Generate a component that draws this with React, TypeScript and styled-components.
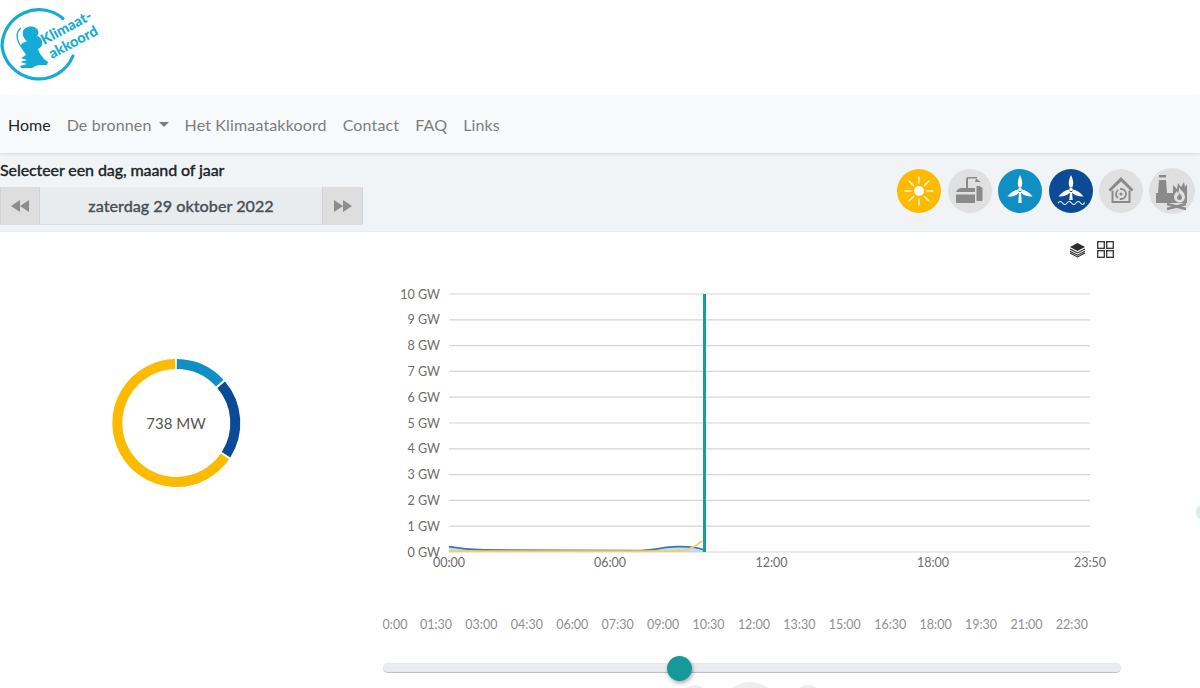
import React from "react";
import styled, { createGlobalStyle } from "styled-components";

const Global = createGlobalStyle`
  html, body { margin: 0; padding: 0; background: #fff; overflow: hidden; }
  body { font-family: Lato, "Open Sans", sans-serif; }
  #root { height: 688px; }
  * { box-sizing: border-box; }
`;

const Page = styled.div`
  position: relative;
  width: 1200px;
  height: 688px;
  overflow: hidden;
`;
const Header = styled.header`
  height: 96px;
  background: #fff;
`;
const Nav = styled.nav`
  height: 57px;
  background: #f8f9fa;
  display: flex;
  align-items: center;
  box-shadow: 0 1px 3px rgba(0, 0, 0, 0.12);
  position: relative;
  z-index: 1;
`;
const NavItem = styled.span<{ $active?: boolean }>`
  padding: 0 8px;
  font-size: 16px;
  line-height: 24px;
  letter-spacing: ${(p) => (p.$active ? 0 : 0.15)}px;
  color: ${(p) => (p.$active ? "#212529" : "#7d7d7d")};
  display: inline-flex;
  align-items: center;
`;
const Caret = styled.i`
  display: inline-block;
  margin-left: 7px;
  border-top: 5px solid #7d7d7d;
  border-left: 5px solid transparent;
  border-right: 5px solid transparent;
`;
const Toolbar = styled.section`
  height: 79px;
  background: #f1f4f6;
  border-bottom: 1px solid #e9ecee;
  display: flex;
  justify-content: space-between;
  padding-right: 5px;
`;
const DateColumn = styled.div`
  display: flex;
  flex-direction: column;
`;
const Title = styled.div`
  font-size: 16px;
  font-weight: 500;
  letter-spacing: -0.1px;
  -webkit-text-stroke: 0.3px #212529;
  line-height: 20px;
  height: 34px;
  padding-top: 7px;
  color: #212529;
`;
const DateBar = styled.div`
  display: grid;
  grid-template-columns: 40px 282px 41px;
  height: 38px;
  border-bottom: 1px solid #dcdfe2;
`;
const StepButton = styled.div`
  background: #dedede;
  border-left: 1px solid #d0d2d4;
  border-right: 1px solid #d0d2d4;
  display: flex;
  align-items: center;
  justify-content: center;
`;
const DateLabel = styled.div`
  background: #e9ecef;
  color: #495057;
  font-size: 16.2px;
  font-weight: 500;
  -webkit-text-stroke: 0.3px #495057;
  display: flex;
  align-items: center;
  justify-content: center;
`;
const Sources = styled.div`
  display: flex;
  align-items: center;
  gap: 6.6px;
  padding-bottom: 3px;
`;
const SourceIcon = styled.svg<{ $large?: boolean }>`
  width: ${(p) => (p.$large ? 46 : 44)}px;
  height: ${(p) => (p.$large ? 46 : 44)}px;
  margin-left: ${(p) => (p.$large ? -1 : 0)}px;
  display: block;
`;
const ViewRow = styled.div`
  height: 34px;
  display: flex;
  justify-content: flex-end;
  align-items: center;
  gap: 11px;
  padding-right: 86px;
`;
const ChartRow = styled.div`
  display: grid;
  grid-template-columns: 352px 848px;
  height: 312px;
`;
const DonutCell = styled.div`
  position: relative;
  height: 312px;
`;
const DonutSvg = styled.svg`
  display: block;
  width: 352px;
  height: 312px;
`;
const DonutText = styled.div`
  position: absolute;
  left: 0;
  width: 352px;
  top: 147px;
  text-align: center;
  font-size: 15px;
  line-height: 20px;
  color: #555;
`;
const ChartSvg = styled.svg`
  display: block;
  font-family: Lato, sans-serif;
`;
const Ticks = styled.div`
  display: grid;
  grid-template-columns: 36.6px repeat(15, 45.43px);
  margin: 39px 0 0 376.7px;
  font-size: 12.5px;
  line-height: 16px;
  color: #8f8f8f;
  text-align: center;
`;
const SliderWrap = styled.div`
  position: relative;
  margin: 30px 0 0 383px;
  width: 738px;
  height: 10px;
  border-radius: 5px;
  background: #eaecef;
  border-bottom: 1px solid #bfc1c4;
  box-shadow: inset 0 0 0 1px #e6e8eb;
`;
const Thumb = styled.div`
  position: absolute;
  left: 283.5px;
  top: -7.5px;
  width: 25px;
  height: 25px;
  border-radius: 50%;
  background: #17989a;
  box-shadow: 1px 2px 4px rgba(0, 0, 0, 0.35);
`;
const Dots = styled.div`
  margin: 9px 0 0 682px;
  display: flex;
  align-items: flex-start;
`;
const Dot = styled.div<{ $size: number; $gap: number; $top: number }>`
  width: ${(p) => p.$size}px;
  height: ${(p) => p.$size}px;
  margin-left: ${(p) => p.$gap}px;
  margin-top: ${(p) => p.$top}px;
  border-radius: 50%;
  background: #eeeeee;
  flex: none;
`;
const EdgeMark = styled.div`
  position: absolute;
  left: 1196px;
  top: 506px;
  width: 8px;
  height: 13px;
  border-radius: 50%;
  background: #d6efec;
`;

function polar(r: number, deg: number): [number, number] {
  const a = ((deg - 90) * Math.PI) / 180;
  return [176.3 + r * Math.cos(a), 157 + r * Math.sin(a)];
}
function arc(from: number, to: number) {
  const r = 59;
  const [x1, y1] = polar(r, from);
  const [x2, y2] = polar(r, to);
  return `M${x1} ${y1}A${r} ${r} 0 ${to - from > 180 ? 1 : 0} 1 ${x2} ${y2}`;
}
const segments = [
  { from: 0.5, to: 47.5, color: "#0f8fc4" },
  { from: 49.5, to: 122.5, color: "#0b4a94" },
  { from: 124.5, to: 359, color: "#fdbb00" },
];

const GREY = "#8a8a8a";

const Turbine = ({ towerEnd = 34 }: { towerEnd?: number }) => (
  <g fill="#fff">
    <path d="M22 6C19 12 19.500 16 20.800 18.500h2.400C24.500 16 25 12 22 6z" />
    <path d="M24 20.500c3.500 .5 7.500 3 10.500 7C30 27.800 25.500 26.500 22.800 23.500z" />
    <path d="M20 20.500c-3.500 .5-7.500 3-10.500 7C14 27.800 18.500 26.500 21.200 23.500z" />
    <circle cx="22" cy="20.500" r="1.800" fill="#fff" />
    <path d={`M21 23h2l.7 ${towerEnd - 23}h-3.400z`} />
  </g>
);

const gridY = Array.from({ length: 11 }, (_, i) => ({ v: i, y: 286 - i * 25.8 }));
const xLabels: [string, number][] = [
  ["00:00", 97],
  ["06:00", 258],
  ["12:00", 419.5],
  ["18:00", 581],
  ["23:50", 738],
];
const tickLabels = ["0:00","01:30","03:00","04:30","06:00","07:30","09:00","10:30","12:00","13:30","15:00","16:30","18:00","19:30","21:00","22:30"];
const blueLine = "M97 280.700C107 282.500 115 283.800 131 284S250 284.800 285 284.700C300 284.500 312 281 325 280.700C335 280.500 345 281 352 284";

export default function App() {
  return (
    <Page>
      <Global />
      <Header>
        <svg width="110" height="92" viewBox="0 0 110 92" style={{ display: "block" }}>
          <path d="M73 56A37 37 0 0 1 2 46 37 37 0 0 1 63 18.500" fill="none" stroke="#14acd6" strokeWidth="3.200" strokeLinecap="round" />
          <path d="M23 31C25 26 34 25 37 29C39 31 39 34 37 36C41 37 43 41 42 45C41 47 40 48 38 49C39 53 42 56 44 59L48 62L47 65L41 65C37 65 35 66 32 68L21 68L20 66L27 64L20 62L27 60L21 58L26 55C25 52 21 49 21 46C21 43 25 42 27 41C24 39 22 35 23 31z" fill="#14acd6" />
          <path d="M21 28C16 32 15 38 22 48" fill="none" stroke="#14acd6" strokeWidth="1.300" />
          <g fill="#14acd6" fontFamily="Lato, sans-serif" fontWeight="900" fontSize="14.500">
            <text transform="translate(44 45) rotate(-28)">Klimaat-</text>
            <text transform="translate(52 59) rotate(-28)">akkoord</text>
          </g>
        </svg>
      </Header>
      <Nav>
        <NavItem $active>Home</NavItem>
        <NavItem>De bronnen<Caret /></NavItem>
        <NavItem>Het Klimaatakkoord</NavItem>
        <NavItem>Contact</NavItem>
        <NavItem>FAQ</NavItem>
        <NavItem>Links</NavItem>
      </Nav>
      <Toolbar>
        <DateColumn>
          <Title>Selecteer een dag, maand of jaar</Title>
          <DateBar>
            <StepButton>
              <svg width="18" height="12" viewBox="0 0 18 12"><path d="M9 0v12L0 6zM18 0v12L9 6z" fill="#8d8d8d" /></svg>
            </StepButton>
            <DateLabel>zaterdag 29 oktober 2022</DateLabel>
            <StepButton>
              <svg width="18" height="12" viewBox="0 0 18 12"><path d="M0 0v12l9-6zM9 0v12l9-6z" fill="#8d8d8d" /></svg>
            </StepButton>
          </DateBar>
        </DateColumn>
        <Sources>
          <SourceIcon viewBox="0 0 44 44">
            <circle cx="22" cy="22" r="22" fill="#fdbb00" />
            <circle cx="22" cy="22" r="5" fill="#fff" />
            <g stroke="#fff" strokeWidth="1.500" strokeLinecap="round" opacity="0.85">
              <path d="M22 8v6M22 30v6M8 22h6M30 22h6M12 12l4.500 4.500M27.500 27.500L32 32M32 12l-4.500 4.500M16.500 27.500L12 32" />
            </g>
          </SourceIcon>
          <SourceIcon viewBox="0 0 44 44">
            <circle cx="22" cy="22" r="22" fill="#e0e0e0" />
            <path d="M18 20V10Q18 8 20 8H29v1.500H20V20zM28 9.500l5 3.500h-6z" fill={GREY} />
            <path d="M8 24c0-3 3-5 6-5h13v4H8zM8 25.500h19V34H9c-.6 0-1-.4-1-1zM28.500 17h3l3 2v12c0 .6-.4 1-1 1h-5z" fill={GREY} />
          </SourceIcon>
          <SourceIcon viewBox="0 0 44 44">
            <circle cx="22" cy="22" r="22" fill="#0f8fc4" />
            <Turbine />
          </SourceIcon>
          <SourceIcon viewBox="0 0 44 44">
            <circle cx="22" cy="22" r="22" fill="#0b4a94" />
            <Turbine towerEnd={31} />
            <path d="M9 34c2-2 3-2 4.500 0s3 2 4.500 0 3-2 4.500 0 3 2 4.500 0 3-2 4.500 0 3 2 4-.5" fill="none" stroke="#fff" strokeWidth="1.100" />
          </SourceIcon>
          <SourceIcon viewBox="0 0 44 44">
            <circle cx="22" cy="22" r="22" fill="#e0e0e0" />
            <path d="M22 8L9.500 20.500l2 2L22 12.500l10.500 10 2-2z" fill={GREY} />
            <path d="M13.500 21.500V33h17V21.500" fill="none" stroke={GREY} strokeWidth="2" />
            <circle cx="22" cy="25" r="5" fill="none" stroke={GREY} strokeWidth="1.800" strokeDasharray="9 2" />
            <circle cx="22" cy="25" r="1.600" fill={GREY} />
          </SourceIcon>
          <SourceIcon $large viewBox="0 0 46 46">
            <circle cx="23" cy="23" r="23" fill="#e0e0e0" />
            <path d="M10 7h7v2.500h-7zM10 12h7l1 13H9z" fill={GREY} />
            <path d="M7 25h17v10H7z" fill={GREY} />
            <path d="M24 24V17l4 4 1-6 3 4 3-5 1 5 2-3v19H24z" fill={GREY} />
            <path d="M30 19c1 3 6 5 6 10a5.500 5.500 0 0 1-11 0c0-3 2-4 2.500-6 .8 1 1.300 2 1.500 2.500.8-2 1.200-4 1-6.500z" fill="#e0e0e0" />
            <path d="M30.500 25c.5 1.500 2.500 2.500 2.500 4.500a2.500 2.500 0 0 1-5 0c0-1.500 2-2.500 2.500-4.500z" fill={GREY} />
            <path d="M18 41l19-5M18 36l19 5" stroke={GREY} strokeWidth="2.400" />
          </SourceIcon>
        </Sources>
      </Toolbar>
      <ViewRow>
        <svg width="17" height="17" viewBox="0 0 17 17">
          <path d="M8.500 2L16 6l-7.500 4L1 6z" fill="#2d2d2d" />
          <path d="M1 8l7.500 4L16 8M1 10.200l7.500 4 7.500-4M1 12l7.500 4 7.500-4" fill="none" stroke="#2d2d2d" strokeWidth="1.100" />
        </svg>
        <svg width="17" height="17" viewBox="0 0 17 17" fill="none" stroke="#333" strokeWidth="1.300">
          <rect x="0.700" y="0.700" width="6.600" height="6.600" />
          <rect x="9.700" y="0.700" width="6.600" height="6.600" />
          <rect x="0.700" y="9.700" width="6.600" height="6.600" />
          <rect x="9.700" y="9.700" width="6.600" height="6.600" />
        </svg>
      </ViewRow>
      <ChartRow>
        <DonutCell>
          <DonutSvg viewBox="0 0 352 312">
            {segments.map((s) => (
              <path key={s.color} d={arc(s.from, s.to)} fill="none" stroke={s.color} strokeWidth="10" />
            ))}
          </DonutSvg>
          <DonutText>738 MW</DonutText>
        </DonutCell>
        <ChartSvg width="848" height="312" viewBox="0 0 848 312">
          {gridY.map((g) => (
            <g key={g.v}>
              <line x1="97" x2="738" y1={g.y} y2={g.y} stroke="#d5d5d5" strokeWidth="1.200" />
              <text x="88" y={g.y + 4.500} textAnchor="end" fontSize="12.500" fill="#6c6c6c">{g.v} GW</text>
            </g>
          ))}
          {xLabels.map(([t, x]) => (
            <text key={t} x={x} y="301" textAnchor="middle" fontSize="12.500" fill="#6c6c6c">{t}</text>
          ))}
          <path d={`${blueLine}V286H97z`} fill="#a9d3ea" opacity="0.7" />
          <path d={blueLine} fill="none" stroke="#3a78b5" strokeWidth="1.800" />
          <path d="M97 285.200H325C335 285 342 282 350 275" fill="none" stroke="#f5cf5b" strokeWidth="1.800" />
          <line x1="352.500" x2="352.500" y1="28" y2="286" stroke="#12a09a" strokeWidth="3" />
        </ChartSvg>
      </ChartRow>
      <Ticks>
        {tickLabels.map((t) => <span key={t}>{t}</span>)}
      </Ticks>
      <SliderWrap>
        <Thumb />
      </SliderWrap>
      <Dots>
        <Dot $size={26} $gap={0} $top={3} />
        <Dot $size={60} $gap={12} $top={0} />
        <Dot $size={26} $gap={15} $top={3} />
      </Dots>
      <EdgeMark />
    </Page>
  );
}
